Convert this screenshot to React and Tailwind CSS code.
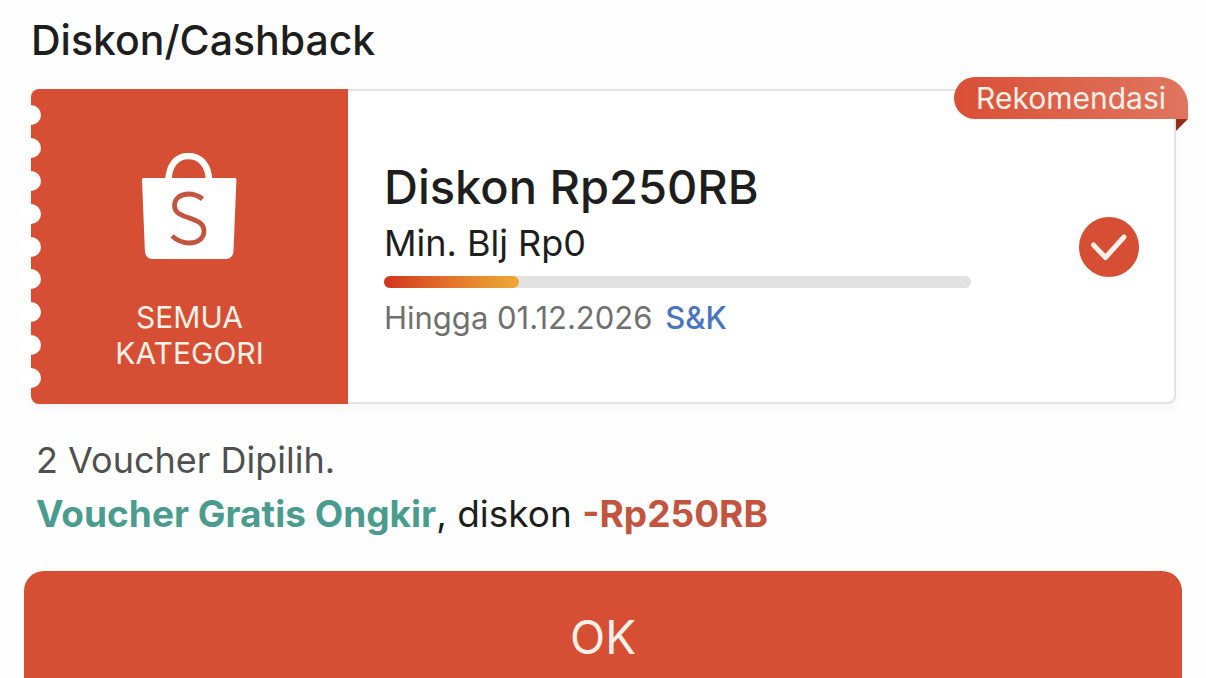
const notches = [0, 1, 2, 3, 4, 5, 6, 7, 8];

function BagLogo() {
  return (
    <svg width="96" height="108" viewBox="0 0 96 108" aria-hidden="true">
      <path d="M26.500 28 C26.500 12 35 3 46.500 3 C58 3 67 12 67 28" fill="none" stroke="#fff" strokeWidth="6.500" />
      <path
        d="M1 25 H93 Q94.500 25 94.400 27 L91.500 98 Q91 106 83 106 H11 Q3.500 106 2.900 98 L0 27 Q0 25 1 25 Z"
        fill="#fff"
      />
      <path
        d="M60.500 46 C56 42.500 51.500 41 46.500 41 C38.500 41 32.500 45.500 32.500 52.500 C32.500 59 37.500 61.500 46 64.500 C56 68 62 70.500 62 78 C62 85.500 55.500 90 47.500 90 C40.500 90 35 87.500 30 83"
        fill="none"
        stroke="#c3543f"
        strokeWidth="4.800"
      />
    </svg>
  );
}

function RecommendedBadge() {
  return (
    <div className="absolute -top-3 -right-3">
      <div className="flex h-[42px] items-center rounded-l-[21px] rounded-tr-[28px] bg-linear-to-r from-[#d94f35] to-[#e0755f] px-[22px] text-[30px] leading-none text-[#fff1e8]">
        Rekomendasi
      </div>
      <svg className="absolute top-full right-0" width="12" height="12" viewBox="0 0 12 12" aria-hidden="true">
        <path d="M0 0H12L0 12Z" fill="#8f2f1c" />
      </svg>
    </div>
  );
}

function VoucherCard() {
  return (
    <article className="relative mr-[30px] ml-[31px] flex h-[315px] rounded-lg bg-white shadow-[0_6px_10px_rgba(0,0,0,0.03)]">
      <div className="relative flex w-[317px] shrink-0 flex-col items-center rounded-l-lg bg-[#d64e33] pt-16">
        <BagLogo />
        <p className="mt-[38px] text-center text-[30px] leading-9 text-[#fff1e8]">
          SEMUA
          <br />
          KATEGORI
        </p>
        <div className="absolute top-4 bottom-4 -left-[10px] flex flex-col justify-between">
          {notches.map((n) => (
            <span key={n} className="size-5 rounded-full bg-white" />
          ))}
        </div>
      </div>
      <div className="flex min-w-0 flex-1 items-center justify-between rounded-r-lg border-2 border-l-0 border-[#e2e2e2] pr-[35px] pl-9">
        <div className="w-[587px]">
          <h2 className="pt-1 text-[47px] leading-[60px] font-medium">Diskon Rp250RB</h2>
          <p className="text-[36px] leading-[52px]">Min. Blj Rp0</p>
          <div className="mt-[7px] h-3 rounded-full bg-[#e1e1e1]">
            <div className="h-full w-[23%] rounded-full bg-linear-to-r from-[#d3301f] to-[#edaa36]" />
          </div>
          <p className="mt-2 text-[31px] leading-[44px] text-[#707070]">
            Hingga 01.12.2026{" "}
            <a href="#terms" className="ml-1 font-medium text-[#4b74c0]">
              S&amp;K
            </a>
          </p>
        </div>
        <label className="relative flex size-[60px] shrink-0">
          <input
            type="checkbox"
            defaultChecked
            aria-label="Pilih voucher Diskon Rp250RB"
            className="peer size-full appearance-none rounded-full border-2 border-[#d64e33] checked:bg-[#d64e33]"
          />
          <svg className="pointer-events-none absolute inset-0 hidden peer-checked:block" viewBox="0 0 60 60" aria-hidden="true">
            <path d="M14.500 28 L26.500 40.500 L45 20" fill="none" stroke="#fff1e8" strokeWidth="5" strokeLinecap="round" strokeLinejoin="round" />
          </svg>
        </label>
      </div>
      <RecommendedBadge />
    </article>
  );
}

export default function App() {
  return (
    <main className="flex min-h-screen flex-col bg-[#fefefe] font-['Inter',sans-serif] text-[#1e1e1e]">
      <h1 className="pt-[15px] pb-6 pl-[31px] text-[41px] leading-[50px] font-medium">Diskon/Cashback</h1>
      <VoucherCard />
      <section className="mt-[29px] pl-9 leading-[54px]">
        <p className="text-[36px] leading-[54px] text-[#505050]">2 Voucher Dipilih.</p>
        <p className="text-[37px] leading-[54px]">
          <strong className="font-bold text-[#4b9c8e]">Voucher Gratis Ongkir</strong>, diskon{" "}
          <strong className="font-bold text-[#c2553f]">-Rp250RB</strong>
        </p>
      </section>
      <button
        type="button"
        className="mx-6 mt-[30px] flex flex-1 items-start justify-center rounded-t-[20px] bg-[#d64e33] pt-[38px] text-[46px] leading-[56px] text-[#fff1e8]"
      >
        OK
      </button>
    </main>
  );
}
